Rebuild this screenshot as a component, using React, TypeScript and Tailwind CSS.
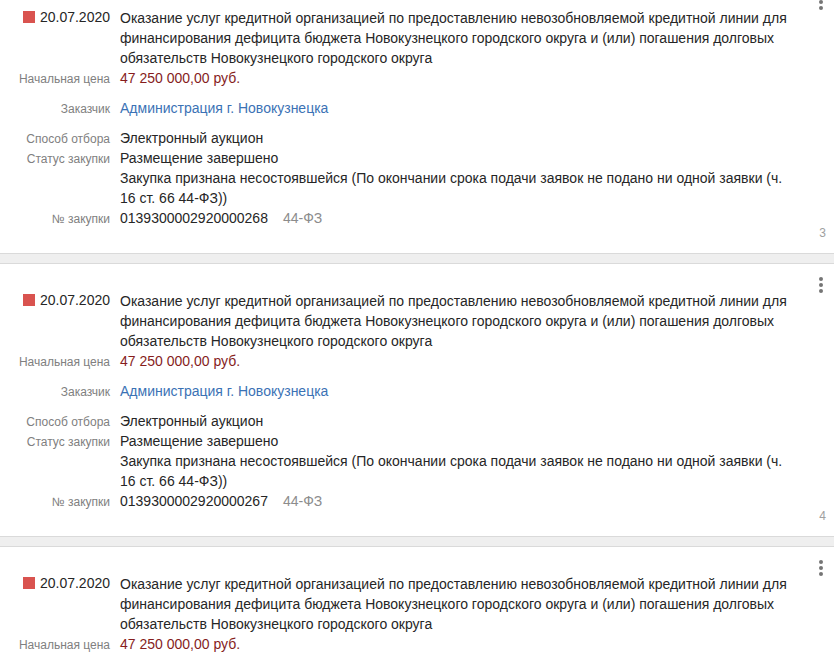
import { Fragment } from "react";

type Purchase = {
  number: string;
  page: number;
};

const purchases: Purchase[] = [
  { number: "0139300002920000268", page: 3 },
  { number: "0139300002920000267", page: 4 },
  { number: "0139300002920000266", page: 5 },
];

function Label({ children, className = "" }: { children: React.ReactNode; className?: string }) {
  return <div className={"text-right text-xs text-[#808080] " + className}>{children}</div>;
}

function Card({ p }: { p: Purchase }) {
  return (
    <div className="relative bg-white pt-[26px] pb-[25px] pr-[14px]">
      <div className="absolute right-[11px] top-[13px] flex flex-col gap-[2px]">
        <span className="h-[4px] w-[4px] rounded-full bg-[#757575]" />
        <span className="h-[4px] w-[4px] rounded-full bg-[#757575]" />
        <span className="h-[4px] w-[4px] rounded-full bg-[#757575]" />
      </div>

      <div className="grid grid-cols-[110px_1fr] items-baseline gap-x-[10px] text-[14px] leading-[20px] text-[#262626]">
        <div className="flex items-center justify-end gap-[5px]">
          <span className="h-[12px] w-[12px] bg-[#d9534f]" />
          <span>20.07.2020</span>
        </div>
        <div>
          Оказание услуг кредитной организацией по предоставлению невозобновляемой кредитной линии для
          финансирования дефицита бюджета Новокузнецкого городского округа и (или) погашения долговых
          обязательств Новокузнецкого городского округа
        </div>

        <Label>Начальная цена</Label>
        <div className="text-[#861d1d]">47 250 000,00 руб.</div>

        <Label className="mt-[10px]">Заказчик</Label>
        <div className="mt-[10px] text-[#3b72b5]">Администрация г. Новокузнецка</div>

        <Label className="mt-[10px]">Способ отбора</Label>
        <div className="mt-[10px]">Электронный аукцион</div>

        <Label>Статус закупки</Label>
        <div>
          Размещение завершено
          <br />
          Закупка признана несостоявшейся (По окончании срока подачи заявок не подано ни одной заявки (ч.
          <br />
          16 ст. 66 44-ФЗ))
        </div>

        <Label>№ закупки</Label>
        <div>
          {p.number}
          <span className="ml-[15px] text-[#8c8c8c]">44-ФЗ</span>
        </div>
      </div>

      <div className="absolute bottom-[12px] right-[8px] text-xs leading-[16px] text-[#a0a0a0]">{p.page}</div>
    </div>
  );
}

export default function App() {
  return (
    <div className="h-[654px] overflow-hidden bg-white font-['Liberation_Sans',Arial,sans-serif]">
      <div className="-mt-[19px]">
        {purchases.map((p, i) => (
          <Fragment key={p.number}>
            {i > 0 && <div className="h-[11px] border-y border-[#dadada] bg-[#efefef]" />}
            <Card p={p} />
          </Fragment>
        ))}
      </div>
    </div>
  );
}
